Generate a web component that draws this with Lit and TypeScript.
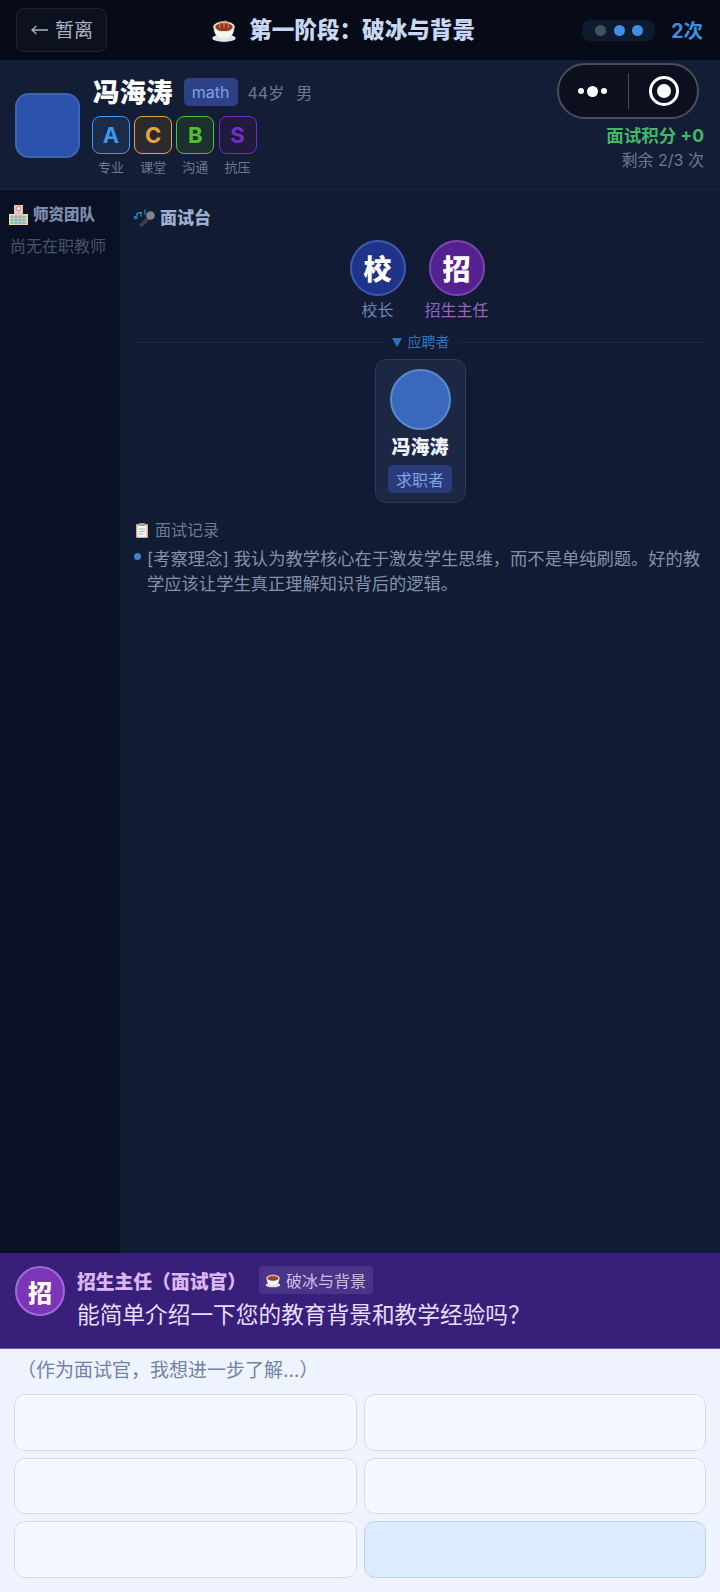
import { LitElement, html, css } from "lit";
import { customElement } from "lit/decorators.js";

const cup = (s: number) => html`<svg class="emo" width=${s} height=${s} viewBox="0 0 24 24"><ellipse cx="12" cy="19.500" rx="10.800" ry="3.500" fill="#dfe3e6"/><path d="M2.500 9c0 7.500 3.500 10.500 9.500 10.500S21.500 16.500 21.500 9z" fill="#f4f4f2"/><ellipse cx="12" cy="9" rx="10" ry="5" fill="#e4e0da"/><ellipse cx="12" cy="9.300" rx="8" ry="3.700" fill="#93391f"/><path d="M8 10V6c0-1 1.500-1 1.500-2M12 10V5c0-1 1.500-1 1.500-2M16 10V6c0-1-1.500-1-1.500-2" stroke="#d9886a" stroke-width="1" fill="none"/></svg>`;
const school = html`<svg class="emo" width="19" height="22" viewBox="0 0 19 22"><rect x="0" y="10" width="19" height="11" fill="#efe2a0"/><rect x="5" y="1" width="9" height="20" fill="#eec3b6"/><circle cx="9.500" cy="4.500" r="2.200" fill="#fff" stroke="#c44" stroke-width=".7"/><path d="M1 13h17M1 16h17M1 19h17M3 11v9M7 11v9M11 11v9M15 11v9" stroke="#69b3c6" stroke-width="1"/></svg>`;
const mic = html`<svg class="emo" width="22" height="20" viewBox="0 0 22 20"><path d="M5 17l9-9 3 2-9 9z" fill="#3d4048"/><circle cx="16.500" cy="7.500" r="4.300" fill="#7e838c"/><path d="M2 8.500a1.400 1.100 0 1 0 1 1V5.500l4-1v4" stroke="#2f9fd6" stroke-width="1.100" fill="none"/><path d="M11 1.500v5" stroke="#2f9fd6" stroke-width="1.100"/></svg>`;
const clip = html`<svg class="emo" width="14" height="17" viewBox="0 0 14 16"><rect x="1" y="1.500" width="12" height="14" rx="1" fill="#d9a877"/><rect x="2.400" y="3" width="9.200" height="11.400" fill="#f2f4f5"/><rect x="4" y=".5" width="6" height="3" rx=".8" fill="#9aa2ac"/><path d="M4 6.500h6M4 9h6M4 11.500h4" stroke="#9fb4c4" stroke-width="1"/></svg>`;

@customElement("app-root")
export class AppRoot extends LitElement {
  static styles = css`
    :host { display: flex; flex-direction: column; width: 720px; height: 1592px; overflow: hidden; position: relative;
      font-family: Inter, "Noto Sans CJK SC", sans-serif; background: #111b33; }
    .emo { flex: none; display: block; }
    .top { height: 60px; flex: none; background: #070b18; display: flex; align-items: center; padding: 0 17px 0 16px; box-sizing: border-box; position: relative; }
    .back { width: 91px; height: 44px; box-sizing: border-box; border: 1px solid #1f2433; border-radius: 8px; background: #0d111e; color: #a9b4c8; font-size: 19px; display: flex; align-items: center; justify-content: center; gap: 5px; }
    .back span { padding-bottom: 3px; }
    .title { flex: 1; display: flex; align-items: center; justify-content: center; gap: 12px; color: #c9d8f2; font-size: 22.600px; font-weight: 900; padding-right: 3px; }
    .title span { padding-bottom: 3px; }
    .dots { display: flex; align-items: center; gap: 7.500px; height: 21px; padding: 0 13px; box-sizing: border-box; width: 73px; background: #0e1a2e; border-radius: 8px; }
    .dot { width: 11px; height: 11px; border-radius: 50%; background: #3f8fe6; flex: none; }
    .dot.off { background: #47505f; }
    .count { color: #3f8fe0; font-size: 19.500px; font-weight: 700; margin-left: 16px; padding-bottom: 2px; }
    .info { height: 130px; flex: none; box-sizing: border-box; background: #131d36; border-bottom: 1px solid #1b2640; display: flex; padding: 18px 16px 0 15px; position: relative; }
    .ava { width: 65px; height: 65px; box-sizing: border-box; margin-top: 15px; border-radius: 14px; background: #2a52ad; border: 2px solid #3d65b5; flex: none; }
    .who { margin-left: 12px; }
    .nameline { display: flex; align-items: center; height: 28px; }
    .name { color: #fff; font-size: 26.500px; font-weight: 900; line-height: 28px; margin-left: 1px; }
    .tag { margin-left: 11px; height: 28px; width: 54px; border-radius: 5px; background: #2f4186; color: #7fa2ea; font-size: 16px; display: flex; align-items: center; justify-content: center; }
    .meta { color: #6c7a94; font-size: 16px; margin-left: 10px; }
    .meta + .meta { margin-left: 12px; }
    .grades { display: flex; gap: 4.200px; margin-top: 10px; }
    .grade { width: 38px; display: flex; flex-direction: column; align-items: center; }
    .letter { width: 38px; height: 38px; box-sizing: border-box; border-radius: 8px; border: 1.500px solid; display: flex; align-items: center; justify-content: center; font-size: 22px; font-weight: 700; }
    .glabel { color: #6c7a94; font-size: 13px; margin-top: 4px; line-height: 18px; }
    .side { margin-left: auto; text-align: right; padding-top: 46px; }
    .score { color: #43b868; font-size: 17.500px; font-weight: 700; line-height: 24px; }
    .left { color: #6c7a94; font-size: 16px; line-height: 24px; }
    .capsule { position: absolute; left: 557px; top: 63px; width: 142px; height: 56px; box-sizing: border-box; border-radius: 28px; border: 2px solid #4a4d59; background: #0c0f1e; display: flex; align-items: center; }
    .cdots { width: 66px; margin-right: 3px; display: flex; align-items: center; justify-content: center; gap: 3px; box-sizing: border-box; }
    .cdots i { display: block; width: 6px; height: 6px; border-radius: 50%; background: #fff; }
    .cdots i.b { width: 11px; height: 11px; }
    .sep { width: 1px; height: 36px; background: #4a4d59; }
    .ring { width: 30px; height: 30px; box-sizing: border-box; border-radius: 50%; border: 3px solid #fff; margin-left: 20px; display: flex; align-items: center; justify-content: center; }
    .ring i { display: block; width: 14px; height: 14px; border-radius: 50%; background: #fff; }
    .body { flex: 1; display: flex; min-height: 0; }
    .teachers { width: 120px; flex: none; background: #0b1124; padding: 14px 9px 0; box-sizing: border-box; }
    .th { display: flex; align-items: center; gap: 5px; color: #7c8dae; font-size: 15.500px; font-weight: 900; line-height: 22px; }
    .none { color: #48536b; font-size: 16px; line-height: 22px; margin-top: 9px; margin-left: 1px; white-space: nowrap; }
    .stage { flex: 1; padding: 17px 14px 0 14px; box-sizing: border-box; min-width: 0; }
    .sh { display: flex; align-items: center; gap: 4px; color: #9eb0d2; font-size: 17px; font-weight: 900; line-height: 22px; }
    .panel { display: flex; justify-content: center; gap: 19px; margin: 11px 6px 0 0; }
    .person { display: flex; flex-direction: column; align-items: center; width: 60px; }
    .circle { width: 56px; height: 56px; box-sizing: border-box; border-radius: 50%; border: 2px solid; display: flex; align-items: center; justify-content: center; color: #fff; font-size: 28px; font-weight: 900; }
    .plabel { font-size: 16px; line-height: 22px; margin-top: 3px; white-space: nowrap; }
    .divider { display: flex; align-items: center; margin-top: 11px; gap: 8px; color: #2f74c0; font-size: 14px; line-height: 20px; padding-left: 1px; }
    .divider::before, .divider::after { content: ""; flex: 1; height: 1px; background: #1c2740; }
    .tri { display: inline-block; width: 0; height: 0; border: 5px solid transparent; border-top: 9px solid #2f74c0; border-bottom: 0; margin-right: 6px; }
    .cand { width: 91px; height: 144px; box-sizing: border-box; margin: 7px auto 0; border-radius: 11px; border: 1px solid #2c3a5c; background: #1b2743; display: flex; flex-direction: column; align-items: center; padding-top: 9px; }
    .cava { width: 61px; height: 61px; box-sizing: border-box; border-radius: 50%; background: #3a68bd; border: 2px solid #5f8ad0; }
    .cname { color: #eef2fa; font-size: 19px; font-weight: 900; line-height: 26px; margin-top: 5px; }
    .crole { margin-top: 4px; width: 64px; height: 28px; border-radius: 5px; background: #2b3a78; color: #7fa2ea; font-size: 16px; display: flex; align-items: center; justify-content: center; }
    .lh { display: flex; align-items: center; gap: 6px; margin: 16px 0 0 1px; color: #6c7a94; font-size: 16px; line-height: 22px; }
    .log { display: flex; margin-top: 6px; }
    .bullet { width: 7px; height: 7px; border-radius: 50%; background: #3f7fd0; flex: none; margin-top: 6px; margin-right: 6px; }
    .log p { margin: 0; color: #8391ab; font-size: 17.300px; line-height: 24.500px; }
    .q { height: 96px; flex: none; box-sizing: border-box; background: #38207a; border-bottom: 1px solid #7a5aa8; display: flex; padding: 13px 15px 0; }
    .qava { width: 50px; height: 50px; box-sizing: border-box; border-radius: 50%; background: #7a35b8; border: 2px solid #a468d8; color: #fff; font-size: 24px; font-weight: 900; display: flex; align-items: center; justify-content: center; flex: none; }
    .qbody { margin-left: 12px; }
    .qhead { display: flex; align-items: center; height: 28px; }
    .qname { color: #dcb6f4; font-size: 18.800px; font-weight: 900; }
    .qtag { display: flex; align-items: center; gap: 5px; margin-left: 13px; height: 28px; width: 114px; box-sizing: border-box; padding-left: 6px; border-radius: 4px; background: #4a3488; color: #cdbfe6; font-size: 16px; }
    .qtext { color: #e6defa; font-size: 22.700px; line-height: 30px; margin-top: 6px; white-space: nowrap; }
    .ans { height: 243px; flex: none; box-sizing: border-box; background: #eef3fe; padding: 9px 14px 0; }
    .hint { color: #6f82a8; font-size: 19px; line-height: 26px; padding-left: 3px; white-space: nowrap; }
    .grid { display: grid; grid-template-columns: 1fr 1fr; gap: 7px; margin-top: 10px; }
    .opt { height: 56.500px; box-sizing: border-box; border-radius: 11px; border: 1.500px solid #d3dcee; background: #f5f8ff; }
    .opt.sel { background: #ddebff; border-color: #bcd3ee; }
  `;
  render() {
    const g = [
      ["A", "专业", "#3f96f0", "#1a2c48"],
      ["C", "课堂", "#e8a33d", "#2b2a30"],
      ["B", "沟通", "#55c02f", "#1c3030"],
      ["S", "抗压", "#6f30c8", "#1f1a3e"],
    ];
    return html`
      <div class="top">
        <div class="back"><svg width="20" height="14" viewBox="0 0 20 14"><path d="M18 7H2M6.500 3 2 7l4.500 4" stroke="#a9b4c8" stroke-width="1.300" fill="none"/></svg><span>暂离</span></div>
        <div class="title">${cup(26)}<span>第一阶段：破冰与背景</span></div>
        <div class="dots"><span class="dot off"></span><span class="dot"></span><span class="dot"></span></div>
        <div class="count">2次</div>
      </div>
      <div class="info">
        <div class="ava"></div>
        <div class="who">
          <div class="nameline"><span class="name">冯海涛</span><span class="tag">math</span><span class="meta">44岁</span><span class="meta">男</span></div>
          <div class="grades">${g.map(([l, t, c, b]) => html`<div class="grade"><div class="letter" style="color:${c};border-color:${c};background:${b}">${l}</div><div class="glabel">${t}</div></div>`)}</div>
        </div>
        <div class="side"><div class="score">面试积分 +0</div><div class="left">剩余 2/3 次</div></div>
      </div>
      <div class="capsule"><div class="cdots"><i></i><i class="b"></i><i></i></div><div class="sep"></div><div class="ring"><i></i></div></div>
      <div class="body">
        <div class="teachers">
          <div class="th">${school}<span>师资团队</span></div>
          <div class="none">尚无在职教师</div>
        </div>
        <div class="stage">
          <div class="sh">${mic}<span>面试台</span></div>
          <div class="panel">
            <div class="person"><div class="circle" style="background:#1f3488;border-color:#3c5bb0">校</div><div class="plabel" style="color:#6f86b8">校长</div></div>
            <div class="person"><div class="circle" style="background:#55208f;border-color:#7b45b0">招</div><div class="plabel" style="color:#9a62c0">招生主任</div></div>
          </div>
          <div class="divider"><span><span class="tri"></span>应聘者</span></div>
          <div class="cand"><div class="cava"></div><div class="cname">冯海涛</div><div class="crole">求职者</div></div>
          <div class="lh">${clip}<span>面试记录</span></div>
          <div class="log"><span class="bullet"></span><p>[考察理念] 我认为教学核心在于激发学生思维，而不是单纯刷题。好的教学应该让学生真正理解知识背后的逻辑。</p></div>
        </div>
      </div>
      <div class="q">
        <div class="qava">招</div>
        <div class="qbody">
          <div class="qhead"><span class="qname">招生主任（面试官）</span><span class="qtag">${cup(16)}破冰与背景</span></div>
          <div class="qtext">能简单介绍一下您的教育背景和教学经验吗？</div>
        </div>
      </div>
      <div class="ans">
        <div class="hint">（作为面试官，我想进一步了解...）</div>
        <div class="grid"><div class="opt"></div><div class="opt"></div><div class="opt"></div><div class="opt"></div><div class="opt"></div><div class="opt sel"></div></div>
      </div>
    `;
  }
}
